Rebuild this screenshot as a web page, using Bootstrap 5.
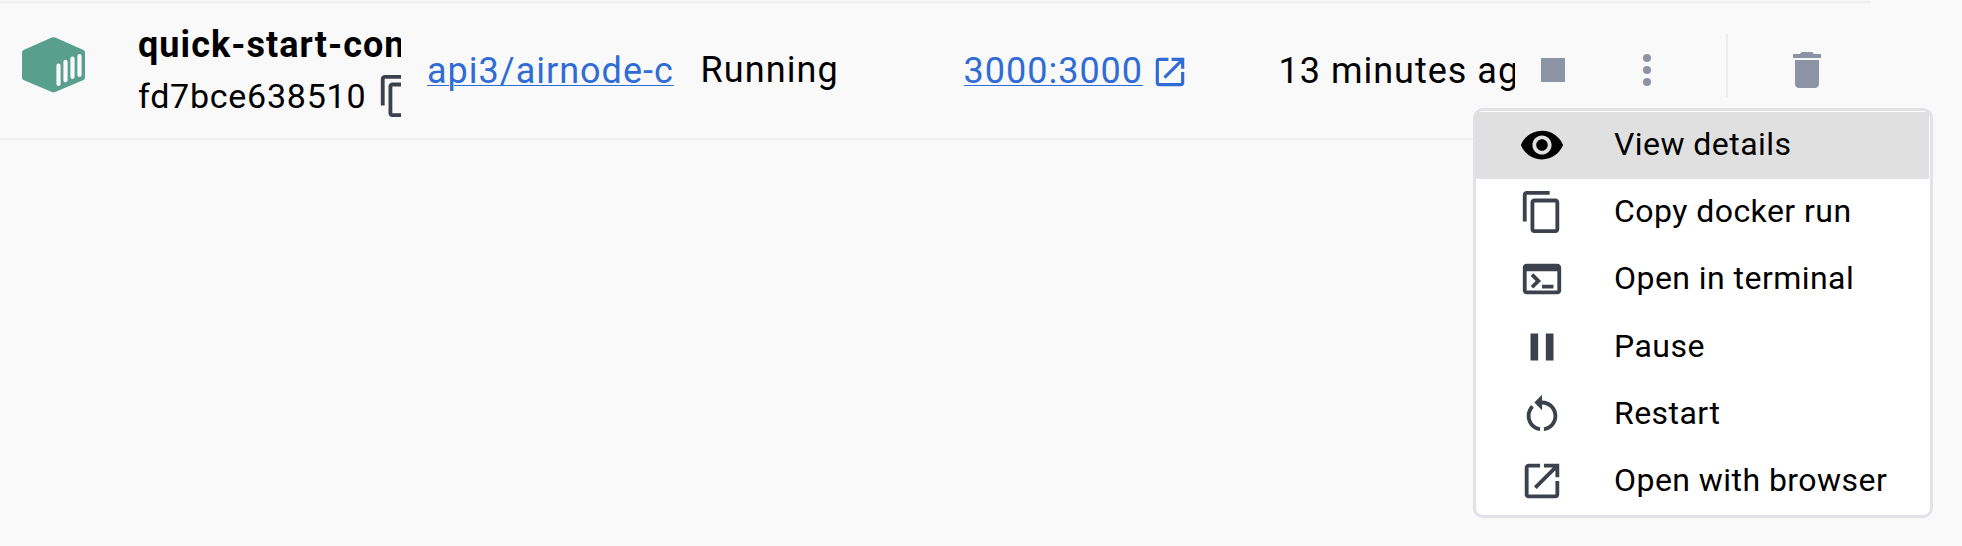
<!DOCTYPE html>
<html lang="en">
<head>
<meta charset="utf-8">
<title>Containers</title>
<link href="https://cdn.jsdelivr.net/npm/bootstrap@5.3.0/dist/css/bootstrap.min.css" rel="stylesheet">
<style>
  body { background: #f9f9f9; color: #000; font-family: Roboto, sans-serif; height: 546px; overflow: hidden; }
  svg { display: block; flex: none; fill: currentColor; }
  .container-row { width: 1871px; height: 139px; margin-top: 1px; border-top: 2px solid #eee; border-bottom: 2px solid #eee; font-size: 36px; letter-spacing: 1px; line-height: 50px; }
  .cell { flex: none; overflow: hidden; white-space: nowrap; height: 100%; }
  .cell-logo { width: 138px; padding: 34px 0 0 22px; }
  .cell-name { width: 263px; padding-top: 17px; }
  .cell-image { width: 247px; margin-left: 26px; }
  .cell-status { width: 236px; margin-left: 26.5px; padding-bottom: 1px; letter-spacing: 1.1px; }
  .cell-port { width: 289px; margin-left: 27px; }
  .cell-age { width: 236.5px; margin-left: 26px; }
  .cell-name b { letter-spacing: 1.05px; }
  .cid { font-size: 34px; line-height: 52px; letter-spacing: .75px; }
  .cid svg { color: #3c424d; margin-left: 10.5px; }
  .blue { color: #2f6cd5; text-decoration: underline; text-decoration-thickness: 1px; text-underline-offset: 2px; }
  .port-icon { color: #2f6cd5; margin: 3px 0 0 8px; }
  .actions { color: #8c93a4; height: 100%; flex: none; padding-bottom: 1px; }
  .stop { margin-left: 13.5px; }
  .more { margin-left: 46px; }
  .split { width: 2px; height: 63px; margin: 0 55.5px 0 55px; background: #ececee; position: relative; bottom: 5px; }
  .menu { position: absolute; left: 1473px; top: 108px; width: 460px; height: 410px; padding: 1px 1px 0 0; background: #fff; border: 3px solid #e1e2e7; border-radius: 10px; --bs-dropdown-min-width: 0; display: block; }
  .entry { height: 67.2px; padding: 0 0 1px 43px; font-size: 32px; letter-spacing: .45px; line-height: 40px; color: #000; }
  .entry svg { color: #3c424d; }
  .entry span { margin: 0 0 2px 49px; }
  .entry.current { background: #e0e0e0; }
  .entry.current svg { color: #000; }
</style>
</head>
<body>
<svg width="0" height="0" class="position-absolute">
  <symbol id="copy" viewBox="0 0 24 24"><path d="M16 1H4c-1.100 0-2 .9-2 2v14h2V3h12V1zm3 4H8c-1.100 0-2 .9-2 2v14c0 1.100.9 2 2 2h11c1.100 0 2-.9 2-2V7c0-1.100-.9-2-2-2zm0 16H8V7h11v14z"/></symbol>
  <symbol id="launch" viewBox="0 0 24 24"><path d="M11 3v2H5v14h14v-7h2v7c0 1.100-.9 2-2 2H5c-1.110 0-2-.9-2-2V5c0-1.100.89-2 2-2zM13 3v2h4.600L7.800 14.800l1.400 1.400L19 6.400V10h2V3z"/></symbol>
</svg>

<main class="container-row d-flex">
  <div class="cell cell-logo">
    <svg width="63" height="56" viewBox="0 0 63 56">
      <path fill="#589f8e" d="M29.800.5q1.700-.7 3.400 0L61.500 13q1.500.8 1.500 2.400v25.200q0 1.600-1.500 2.400L33.200 55.100q-1.700.8-3.400 0L1.500 43Q0 42.200 0 40.600V15.400Q0 13.800 1.500 13z"/>
      <path fill="none" stroke="#f9f9f9" stroke-width="4.200" stroke-linecap="round" d="M36.500 28.500v18.500M43.500 24.800v18.500M50.500 21.500V40M57.500 19v19"/>
    </svg>
  </div>
  <div class="cell cell-name">
    <b class="d-block fw-bold">quick-start-container</b>
    <div class="cid d-flex align-items-center">fd7bce638510<svg width="46" height="46"><use href="#copy"/></svg></div>
  </div>
  <div class="cell cell-image d-flex align-items-center"><a class="blue" href="#">api3/airnode-c</a></div>
  <div class="cell cell-status d-flex align-items-center">Running</div>
  <div class="cell cell-port d-flex align-items-center"><a class="blue" href="#">3000:3000</a><svg class="port-icon" width="38" height="38"><use href="#launch"/></svg></div>
  <div class="cell cell-age d-flex align-items-center">13 minutes ago</div>
  <div class="actions d-flex align-items-center">
    <svg class="stop" width="48" height="48" viewBox="0 0 24 24"><path d="M6 6h12v12H6z"/></svg>
    <svg class="more" width="48" height="48" viewBox="0 0 24 24"><circle cx="12" cy="6" r="2"/><circle cx="12" cy="12" r="2"/><circle cx="12" cy="18" r="2"/></svg>
    <div class="split"></div>
    <svg width="48" height="48" viewBox="0 0 24 24"><path d="M6 19c0 1.100.9 2 2 2h8c1.100 0 2-.9 2-2V7H6zM19 4h-3.500c-.5-.7-1-1-1.700-1h-3.600c-.7 0-1.200.3-1.700 1H5v2h14z"/></svg>
  </div>
</main>

<nav class="menu dropdown-menu">
  <a class="entry current d-flex align-items-center text-decoration-none" href="#"><svg width="46" height="46" viewBox="0 0 24 24"><path d="M12 4.500C7 4.500 2.730 7.610 1 12c1.730 4.390 6 7.500 11 7.500s9.270-3.110 11-7.500c-1.730-4.390-6-7.500-11-7.500zM12 17c-2.760 0-5-2.240-5-5s2.240-5 5-5 5 2.240 5 5-2.240 5-5 5zm0-8c-1.660 0-3 1.340-3 3s1.340 3 3 3 3-1.340 3-3-1.340-3-3-3z"/></svg><span>View details</span></a>
  <a class="entry d-flex align-items-center text-decoration-none" href="#"><svg width="46" height="46"><use href="#copy"/></svg><span>Copy docker run</span></a>
  <a class="entry d-flex align-items-center text-decoration-none" href="#"><svg width="46" height="46" viewBox="0 0 24 24"><path fill-rule="evenodd" d="M4 4h16c1.100 0 2 .9 2 2v12c0 1.100-.9 2-2 2H4c-1.100 0-2-.9-2-2V6c0-1.100.9-2 2-2zM4 8v10h16V8z"/><path d="M12 15h6v2h-6zM7.500 17l-1.400-1.400L8.700 13l-2.600-2.600L7.500 9l4 4z"/></svg><span>Open in terminal</span></a>
  <a class="entry d-flex align-items-center text-decoration-none" href="#"><svg width="46" height="46" viewBox="0 0 24 24"><path d="M6 19h4V5H6v14zm8-14v14h4V5h-4z"/></svg><span>Pause</span></a>
  <a class="entry d-flex align-items-center text-decoration-none" href="#"><svg width="46" height="46" viewBox="0 0 24 24"><path d="M12 5V2L8 6l4 4V7c3.310 0 6 2.690 6 6 0 2.970-2.170 5.430-5 5.910v2.020c3.950-.49 7-3.850 7-7.930 0-4.420-3.580-8-8-8zM6 13c0-1.650.67-3.150 1.760-4.240L6.340 7.340C4.900 8.790 4 10.790 4 13c0 4.080 3.050 7.440 7 7.930v-2.020c-2.830-.48-5-2.940-5-5.910z"/></svg><span>Restart</span></a>
  <a class="entry d-flex align-items-center text-decoration-none" href="#"><svg width="46" height="46"><use href="#launch"/></svg><span>Open with browser</span></a>
</nav>
<script src="https://cdn.jsdelivr.net/npm/bootstrap@5.3.0/dist/js/bootstrap.bundle.min.js"></script>
</body>
</html>
